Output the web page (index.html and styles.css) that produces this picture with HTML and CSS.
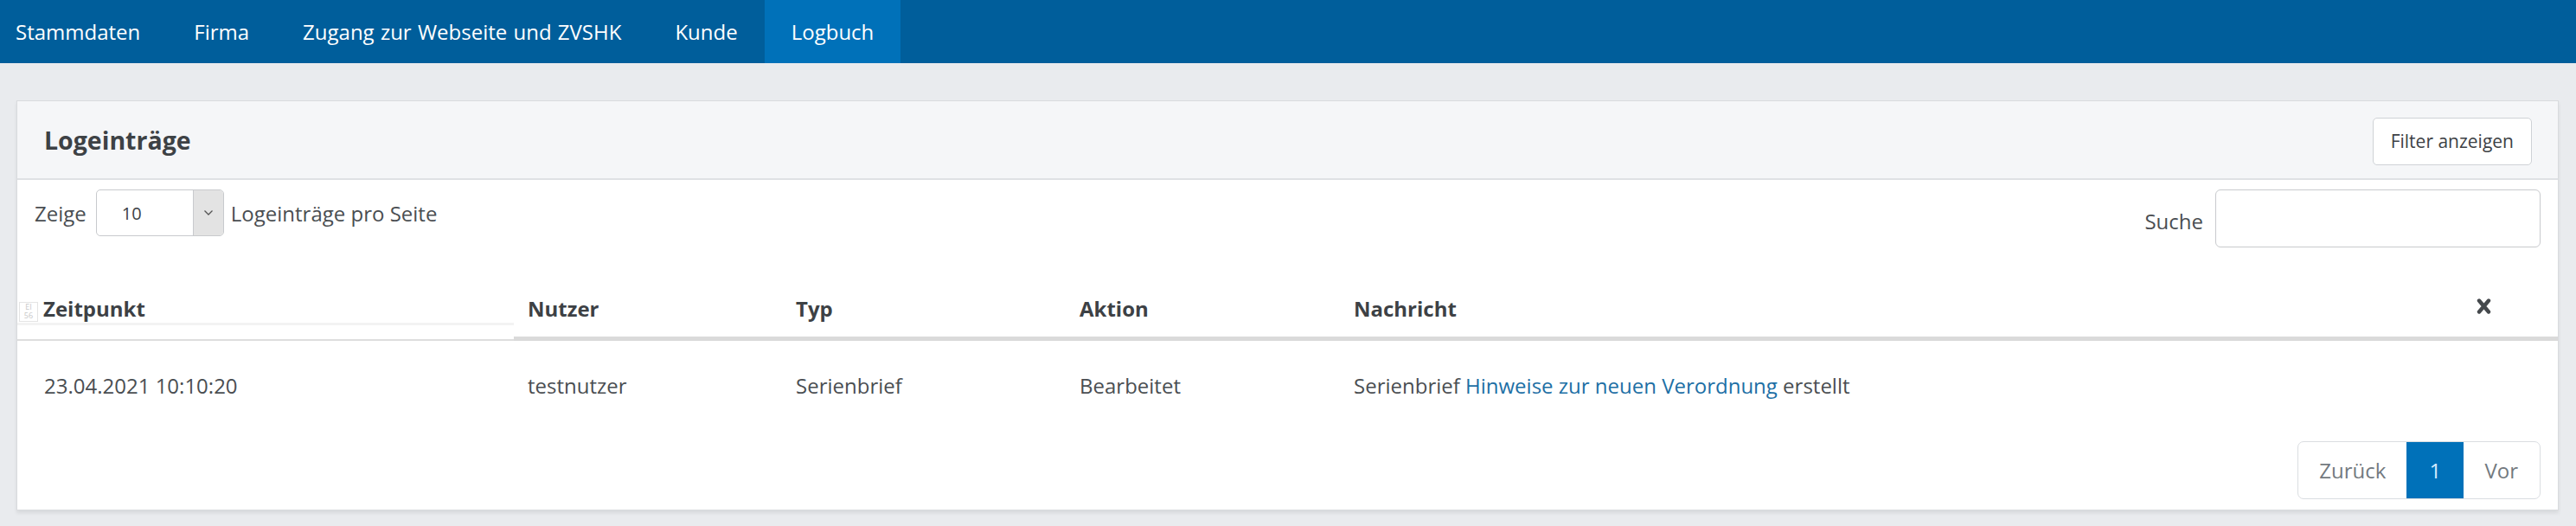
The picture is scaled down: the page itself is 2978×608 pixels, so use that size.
FILE: index.html
```html
<!DOCTYPE html>
<html lang="de">
<head>
<meta charset="utf-8">
<title>Logbuch</title>
<link rel="stylesheet" href="styles.css">
</head>
<body>
<nav class="topnav">
  <ul class="topnav-list">
    <li><a class="topnav-link" href="#">Stammdaten</a></li>
    <li><a class="topnav-link" href="#">Firma</a></li>
    <li><a class="topnav-link" href="#">Zugang zur Webseite und ZVSHK</a></li>
    <li><a class="topnav-link" href="#">Kunde</a></li>
    <li><a class="topnav-link is-active" href="#">Logbuch</a></li>
  </ul>
</nav>
<main class="page">
  <section class="card">
    <header class="card-header">
      <h2 class="card-title">Logeinträge</h2>
      <button class="btn-filter" type="button">Filter anzeigen</button>
    </header>
    <div class="card-body">
      <div class="controls">
        <div class="length-ctrl">
          <span>Zeige</span>
          <div class="select-box">
            <span class="select-value">10</span>
            <span class="select-arrow"><svg width="12" height="8" viewBox="0 0 12 8"><path d="M1.5 1.5 L6 6 L10.5 1.5" fill="none" stroke="#555" stroke-width="1.3"/></svg></span>
          </div>
          <span>Logeinträge pro Seite</span>
        </div>
        <div class="search-ctrl">
          <span>Suche</span>
          <div class="search-input"></div>
        </div>
      </div>
      <table class="log-table">
        <colgroup>
          <col class="c1"><col class="c2"><col class="c3"><col class="c4"><col class="c5"><col class="c6">
        </colgroup>
        <thead>
          <tr>
            <th class="th-first"><span class="img-ph"><span>EI</span><span>56</span></span>Zeitpunkt</th>
            <th>Nutzer</th>
            <th>Typ</th>
            <th>Aktion</th>
            <th>Nachricht</th>
            <th class="th-x"><svg width="17" height="20" viewBox="0 0 17 20"><path d="M3 3.5 L14 16.5 M14 3.5 L3 16.5" stroke="#45494d" stroke-width="4.4" stroke-linecap="round"/></svg></th>
          </tr>
        </thead>
        <tbody>
          <tr>
            <td class="td-first">23.04.2021 10:10:20</td>
            <td>testnutzer</td>
            <td>Serienbrief</td>
            <td>Bearbeitet</td>
            <td>Serienbrief <a class="msg-link" href="#">Hinweise zur neuen Verordnung</a> erstellt</td>
            <td></td>
          </tr>
        </tbody>
      </table>
      <div class="pager-row">
        <ul class="pager">
          <li class="pager-item">Zurück</li>
          <li class="pager-item is-current">1</li>
          <li class="pager-item">Vor</li>
        </ul>
      </div>
    </div>
  </section>
</main>
</body>
</html>
```

FILE: styles.css
```css
* { box-sizing: border-box; }

html, body {
  margin: 0;
  padding: 0;
}

body {
  width: 2978px;
  height: 608px;
  background: #e9ebee;
  font-family: "Open Sans", "Noto Sans", sans-serif;
  font-size: 24px;
  color: #4a4e52;
  overflow: hidden;
}

.topnav {
  height: 73px;
  background: #005e9b;
}

.topnav-list {
  display: flex;
  list-style: none;
  margin: 0 0 0 -13px;
  padding: 0;
  height: 100%;
}

.topnav-link {
  display: block;
  height: 73px;
  line-height: 73px;
  padding: 0 31px;
  color: #ffffff;
  text-decoration: none;
  font-size: 24px;
  word-spacing: 1px;
}

.topnav-link.is-active {
  background: #0071b9;
}

.page {
  padding: 43px 20px 0 19px;
}

.card {
  background: #ffffff;
  border: 1px solid #d9dbde;
  box-shadow: 0 3px 4px rgba(0, 0, 0, 0.08);
}

.card-header {
  height: 91px;
  background: #f5f6f8;
  border-bottom: 2px solid #dfe1e4;
  display: flex;
  align-items: center;
  justify-content: space-between;
  padding: 0 30px 0 31px;
}

.card-title {
  margin: 0;
  font-size: 28.5px;
  font-weight: 700;
  color: #3d4145;
}

.btn-filter {
  height: 55px;
  padding: 0 20px;
  background: #ffffff;
  border: 1.5px solid #cfd2d6;
  border-radius: 5px;
  font-family: "Open Sans", "Noto Sans", sans-serif;
  font-size: 21px;
  color: #3d4145;
  margin-top: 3px;
}

.card-body {
  padding: 11px 20px 12px 0;
}

.controls {
  display: flex;
  justify-content: space-between;
  align-items: flex-start;
  padding-left: 20px;
}

.length-ctrl,
.search-ctrl {
  display: flex;
  align-items: center;
}

.length-ctrl { gap: 11px; }

.select-box {
  width: 148px;
  height: 54px;
  border: 1.5px solid #c8cacd;
  border-radius: 5px;
  display: flex;
  overflow: hidden;
  margin-right: -3px;
}

.select-value {
  flex: 1;
  padding-left: 29px;
  line-height: 54px;
  font-size: 20px;
  color: #3d4145;
}

.select-arrow {
  width: 35px;
  background: #e3e3e3;
  border-left: 1.5px solid #c8cacd;
  display: flex;
  align-items: center;
  justify-content: center;
}

.search-ctrl {
  gap: 14px;
  padding-top: 6px;
}

.search-input {
  width: 376px;
  height: 67px;
  border: 1.5px solid #c8cacd;
  border-radius: 6px;
  background: #fff;
  margin-top: -6px;
}

.log-table {
  width: 2937px;
  margin-top: 33px;
  border-collapse: separate;
  border-spacing: 0;
  table-layout: fixed;
}

.c1 { width: 574px; }
.c2 { width: 310px; }
.c3 { width: 328px; }
.c4 { width: 317px; }
.c5 { width: 1300px; }
.c6 { width: 108px; }

.log-table th {
  text-align: left;
  font-weight: 700;
  color: #3d4145;
  line-height: 34px;
  padding: 19px 16px 15px;
  border-bottom: 5px solid #dadada;
  vertical-align: bottom;
}

.log-table th.th-first {
  padding-left: 2px;
  border-bottom: 2px solid #dedede;
  padding-bottom: 18px;
  background: linear-gradient(to bottom, transparent calc(100% - 19px), #f3f3f3 calc(100% - 19px), #f3f3f3 calc(100% - 16px), transparent calc(100% - 16px));
}

.log-table th.th-x {
  padding-left: 14px;
  padding-bottom: 17px;
}

.img-ph {
  display: inline-flex;
  flex-direction: column;
  width: 22px;
  height: 23px;
  margin-right: 6px;
  border: 1px solid #e4e4e4;
  font-size: 9px;
  line-height: 10px;
  color: #c8c8c8;
  font-weight: 400;
  text-align: center;
  vertical-align: 8px;
}

.log-table td {
  line-height: 34px;
  padding: 35px 16px 36px;
  color: #4a4e52;
}

.log-table td.td-first {
  padding-left: 31px;
}

.msg-link {
  color: #1d6fa5;
  text-decoration: none;
}

.pager-row {
  display: flex;
  justify-content: flex-end;
  margin-top: 11px;
}

.pager {
  display: flex;
  list-style: none;
  margin: 0;
  padding: 0;
  border: 1.5px solid #dadde1;
  border-radius: 7px;
  overflow: hidden;
}

.pager-item {
  height: 65px;
  line-height: 65px;
  padding: 0 24px;
  color: #737a80;
}

.pager-item.is-current {
  background: #0071b9;
  color: #d8ecff;
  width: 66px;
  padding: 0;
  text-align: center;
}

.pager-item:last-child {
  padding: 0 25px 0 24px;
}
```
